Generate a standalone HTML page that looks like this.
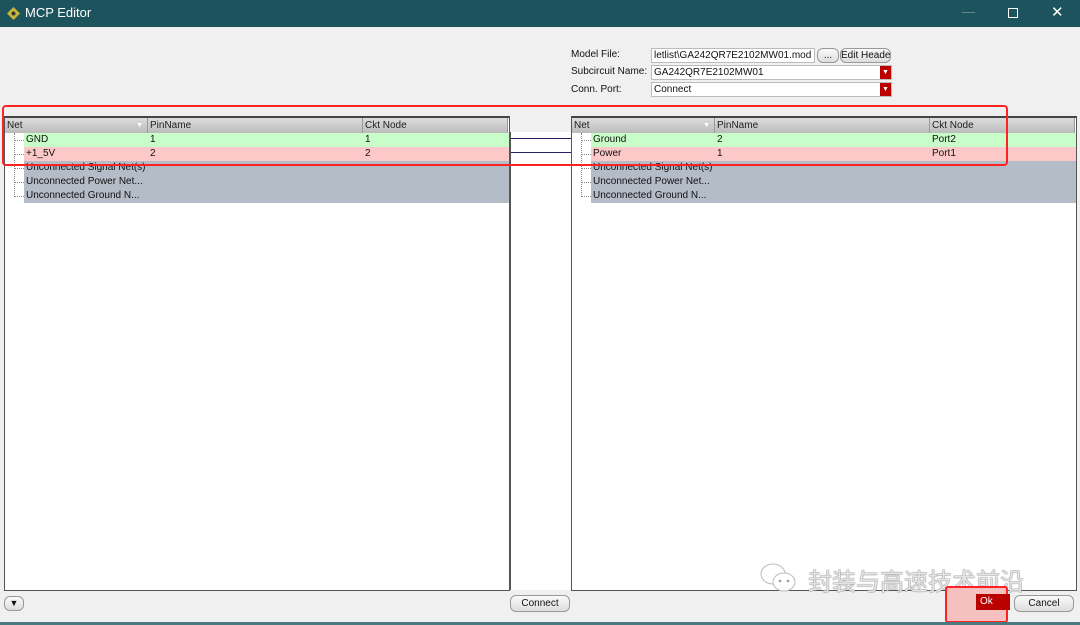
<!DOCTYPE html><html><head><style>
body{margin:0;width:1080px;height:625px;background:#f0f0f0;font-family:"Liberation Sans","Noto Sans CJK SC",sans-serif;font-size:10px;position:relative;overflow:hidden;color:#111}
.a{position:absolute}
.tb{left:0;top:0;width:1080px;height:27px;background:#1c535c;color:#fff;font-size:13px}
.tbl{background:#fff;border:1px solid #555;border-top:2px solid #444;box-sizing:border-box}
.hd{position:absolute;top:0;height:15px;background:linear-gradient(#ddd,#bbb);border-right:1px solid #999;line-height:15px;padding-left:2px;box-sizing:border-box;color:#222}
.row{position:absolute;left:0;right:0;height:14px;line-height:14px}
.c{position:absolute;top:0;height:14px}
.btn{border:1px solid #999;border-radius:6px;background:linear-gradient(#fafafa,#ddd);text-align:center;line-height:15px;font-size:10px;white-space:nowrap;overflow:hidden}
.inp{background:#fff;border:1px solid #bbb;height:13px;line-height:13px;font-size:10px;padding-left:2px;overflow:hidden;white-space:nowrap}
.dd{position:absolute;right:0;top:0;width:11px;height:13px;background:#b00;color:#fff;font-size:7px;text-align:center;line-height:13px}
.tv{position:absolute;left:9px;top:15px;width:0;height:64px;border-left:1px dotted #888}
.th{position:absolute;left:9px;width:10px;border-top:1px dotted #888}
</style></head><body>
<div class="a tb"><svg class="a" style="left:7px;top:7px" width="13" height="13"><path d="M6.5 0L13 6.5 6.5 13 0 6.5Z" fill="#c9b53c"/><circle cx="6.5" cy="6.5" r="2" fill="#333"/></svg><span class="a" style="left:25px;top:5px">MCP Editor</span>
<span class="a" style="left:962px;top:4px;color:#6a8f95">—</span>
<div class="a" style="left:1008px;top:8px;width:8px;height:8px;border:1px solid #fff"></div>
<span class="a" style="left:1051px;top:3px;font-size:15px">✕</span></div>

<span class="a" style="left:571px;top:49px">Model File:</span>
<span class="a" style="left:571px;top:66px">Subcircuit Name:</span>
<span class="a" style="left:571px;top:84px">Conn. Port:</span>
<div class="a inp" style="left:651px;top:48px;width:160px">letlist\GA242QR7E2102MW01.mod</div>
<div class="a btn" style="left:817px;top:48px;width:20px;height:13px;line-height:13px">...</div>
<div class="a btn" style="left:840px;top:48px;width:49px;height:13px;line-height:13px">Edit Heade</div>
<div class="a inp" style="left:651px;top:65px;width:237px">GA242QR7E2102MW01<div class="dd">▼</div></div>
<div class="a inp" style="left:651px;top:82px;width:237px">Connect<div class="dd">▼</div></div>

<div class="a tbl" style="left:4px;top:116px;width:506px;height:475px">
<div class="hd" style="left:0;width:143px">Net<span style="position:absolute;right:4px;font-size:7px;color:#fff">▼</span></div>
<div class="hd" style="left:143px;width:215px">PinName</div><div class="hd" style="left:358px;width:145px">Ckt Node</div>
<div class="tv"></div><div class="th" style="top:22px"></div><div class="th" style="top:36px"></div><div class="th" style="top:50px"></div><div class="th" style="top:64px"></div><div class="th" style="top:78px"></div>
<div class="row" style="top:15px"><div class="c" style="left:19px;right:0;background:#c8fcc8;padding-left:2px">GND<span class="a" style="left:126px">1</span><span class="a" style="left:341px">1</span></div></div>
<div class="row" style="top:29px"><div class="c" style="left:19px;right:0;background:#fcc8c8;padding-left:2px">+1_5V<span class="a" style="left:126px">2</span><span class="a" style="left:341px">2</span></div></div>
<div class="row" style="top:43px"><div class="c" style="left:19px;right:0;background:#b4bcc8;padding-left:2px">Unconnected Signal Net(s)</div></div>
<div class="row" style="top:57px"><div class="c" style="left:19px;right:0;background:#b4bcc8;padding-left:2px">Unconnected Power Net...</div></div>
<div class="row" style="top:71px"><div class="c" style="left:19px;right:0;background:#b4bcc8;padding-left:2px">Unconnected Ground N...</div></div>
</div>
<div class="a" style="left:510px;top:132px;width:61px;height:458px;background:#fff;border-left:1px solid #555"></div>
<div class="a" style="left:511px;top:138px;width:60px;height:1px;background:#226"></div>
<div class="a" style="left:511px;top:152px;width:60px;height:1px;background:#226"></div>
<div class="a tbl" style="left:571px;top:116px;width:506px;height:475px">
<div class="hd" style="left:0;width:143px">Net<span style="position:absolute;right:4px;font-size:7px;color:#fff">▼</span></div>
<div class="hd" style="left:143px;width:215px">PinName</div><div class="hd" style="left:358px;width:145px">Ckt Node</div>
<div class="tv"></div><div class="th" style="top:22px"></div><div class="th" style="top:36px"></div><div class="th" style="top:50px"></div><div class="th" style="top:64px"></div><div class="th" style="top:78px"></div>
<div class="row" style="top:15px"><div class="c" style="left:19px;right:0;background:#c8fcc8;padding-left:2px">Ground<span class="a" style="left:126px">2</span><span class="a" style="left:341px">Port2</span></div></div>
<div class="row" style="top:29px"><div class="c" style="left:19px;right:0;background:#fcc8c8;padding-left:2px">Power<span class="a" style="left:126px">1</span><span class="a" style="left:341px">Port1</span></div></div>
<div class="row" style="top:43px"><div class="c" style="left:19px;right:0;background:#b4bcc8;padding-left:2px">Unconnected Signal Net(s)</div></div>
<div class="row" style="top:57px"><div class="c" style="left:19px;right:0;background:#b4bcc8;padding-left:2px">Unconnected Power Net...</div></div>
<div class="row" style="top:71px"><div class="c" style="left:19px;right:0;background:#b4bcc8;padding-left:2px">Unconnected Ground N...</div></div>
</div>
<div class="a" style="left:2px;top:105px;width:1002px;height:57px;border:2px solid #f22;border-radius:4px"></div>

<svg class="a" style="left:758px;top:562px" width="40" height="32"><ellipse cx="15" cy="12" rx="12" ry="10" fill="#fff" stroke="#bbb"/><ellipse cx="26" cy="20" rx="11" ry="9" fill="#fff" stroke="#bbb"/><circle cx="22" cy="19" r="1.3" fill="#999"/><circle cx="30" cy="19" r="1.3" fill="#999"/></svg>
<div class="a" style="left:808px;top:562px;font-size:24px;color:#e4e4e4;text-shadow:0 0 1px #666,0 0 1px #666">封装与高速技术前沿</div>
<div class="a btn" style="left:4px;top:596px;width:18px;height:13px;line-height:13px;font-size:9px">▼</div>
<div class="a btn" style="left:510px;top:595px;width:58px;height:15px">Connect</div>
<div class="a" style="left:945px;top:586px;width:59px;height:33px;border:2px solid #f22;border-radius:3px;background:#f4c0c0"></div>
<div class="a" style="left:976px;top:594px;width:30px;height:16px;background:#b00;color:#fff;line-height:16px;font-size:10px;padding-left:4px">Ok</div>
<div class="a btn" style="left:1014px;top:595px;width:58px;height:15px">Cancel</div>
<div class="a" style="left:0;top:622px;width:1080px;height:3px;background:#4a7a80"></div>
</body></html>
